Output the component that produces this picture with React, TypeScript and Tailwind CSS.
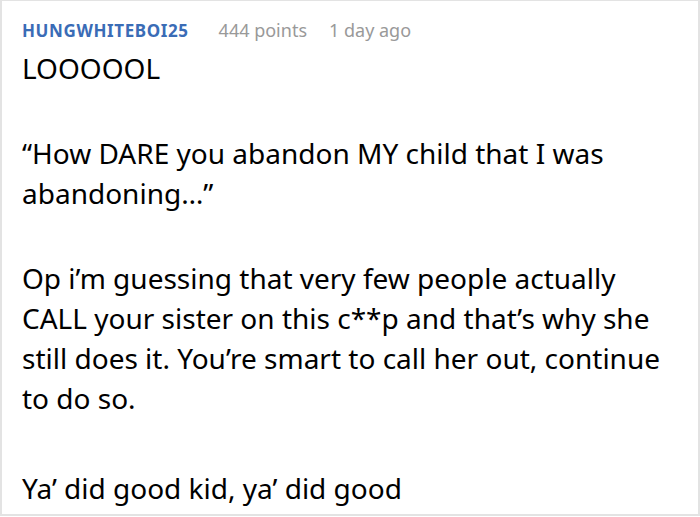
import * as React from "react";

export default function App() {
  return (
    <div className="h-[517px] w-[700px] bg-white font-['Noto_Sans',sans-serif]">
      <div className="h-[516px] border-x-2 border-b-2 border-t border-[#e3e3e3] pl-[20px] pr-4 pt-[17px]">
        <div className="flex items-baseline leading-6">
          <span className="text-[17px] font-bold uppercase tracking-[0.6px] text-[#3a6cb6]">
            HungWhiteBoi25
          </span>
          <span className="ml-[30px] text-[18px] text-[#999999]">444 points</span>
          <span className="ml-[22px] text-[18px] text-[#999999]">1 day ago</span>
        </div>
        <div className="mt-[5px] text-[28px] leading-[40px] text-black">
          <p>LOOOOOL</p>
          <p className="mt-[45px]">
            “How DARE you abandon MY child that I was abandoning…”
          </p>
          <p className="mt-[45px]">
            Op i’m guessing that very few people actually CALL your sister on this c**p and
            that’s why she still does it. You’re smart to call her out, continue to do so.
          </p>
          <p className="mt-[50px]">Ya’ did good kid, ya’ did good</p>
        </div>
      </div>
    </div>
  );
}
